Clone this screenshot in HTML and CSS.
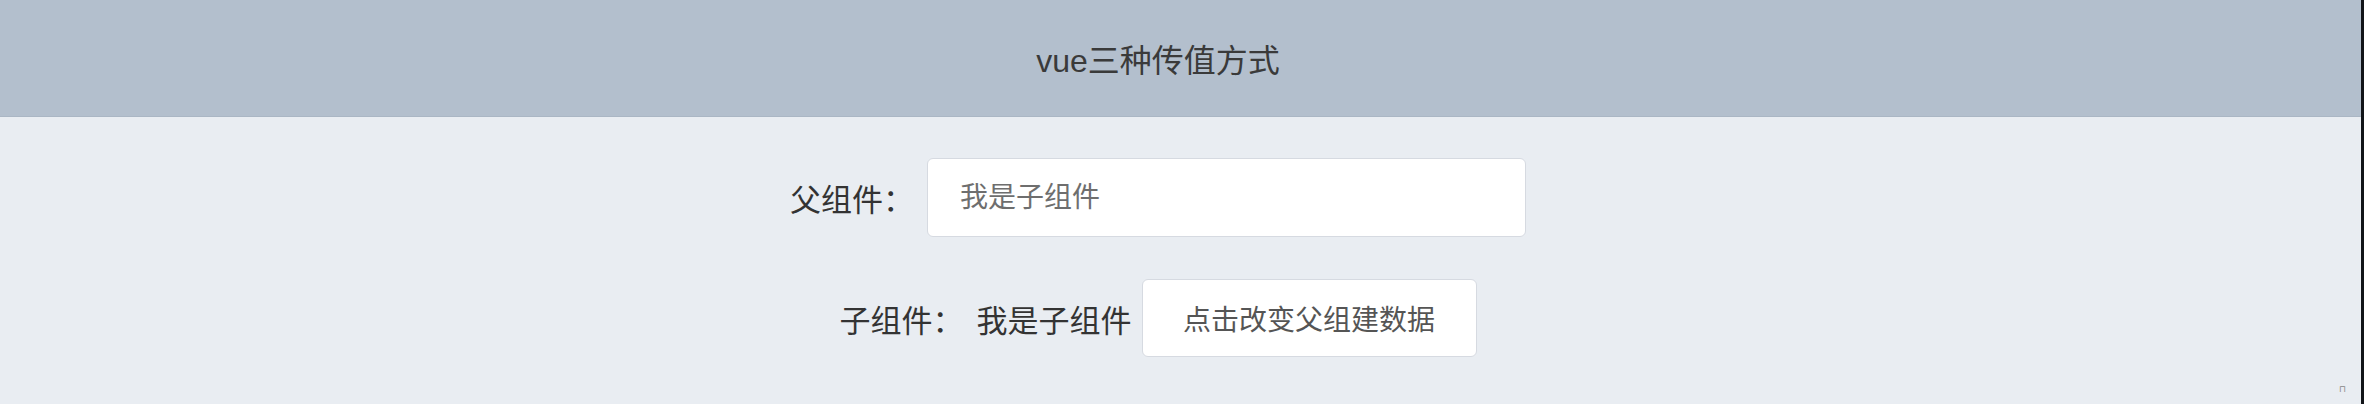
FILE: index.html
```html
<!DOCTYPE html>
<html lang="zh-CN">
<head>
    <meta charset="UTF-8">
    <title>vue三种传值方式</title>
    <link rel="stylesheet" href="styles.css">
</head>
<body>
    <div class="app">
        <header class="header">
            <h1>vue三种传值方式</h1>
        </header>

        <main class="main">
            <div class="row">
                <label class="label" for="parent-input">父组件：</label>
                <input id="parent-input" class="field" type="text" placeholder="我是子组件">
            </div>

            <div class="row">
                <span class="label">子组件：</span>
                <span class="value">我是子组件</span>
                <button class="btn">点击改变父组建数据</button>
            </div>
        </main>

        <span class="corner-mark">⊓</span>
    </div>
</body>
</html>
```

FILE: styles.css
```css
html, body {
    margin: 0;
    padding: 0;
    height: 100%;
}
body {
    background: #111418;
    font-family: "Liberation Sans", "Noto Sans CJK SC", sans-serif;
    color: #333;
}
.app {
    position: relative;
    height: 100%;
    margin-right: 3px;
    background: #e9edf2;
}
.header {
    height: 117px;
    background: #b3bfcd;
    border-bottom: 1px solid #aab6c4;
    box-sizing: border-box;
    display: flex;
    align-items: center;
    justify-content: center;
    padding-right: 45px;
}
.header h1 {
    margin: 0;
    font-size: 32px;
    font-weight: normal;
    color: #3a3a3a;
}
.main {
    display: flex;
    flex-direction: column;
    align-items: center;
    gap: 42px;
    padding-top: 41px;
    padding-right: 45px;
}
.row {
    display: flex;
    align-items: center;
}
.label {
    font-size: 31px;
    color: #333;
    margin-right: 13px;
}
.value {
    font-size: 31px;
    color: #333;
    margin-right: 10px;
}
.field {
    width: 599px;
    height: 79px;
    box-sizing: border-box;
    border: 1px solid #d6dae1;
    border-radius: 6px;
    background: #fff;
    padding: 0 32px;
    font-family: inherit;
    font-size: 28px;
    color: #333;
    outline: none;
}
.field::placeholder {
    color: #6e6e6e;
}
.btn {
    width: 335px;
    height: 78px;
    box-sizing: border-box;
    border: 1px solid #d6dae1;
    border-radius: 6px;
    background: #fff;
    font-family: inherit;
    font-size: 28px;
    color: #555;
    padding: 0;
    cursor: pointer;
}
.corner-mark {
    position: absolute;
    right: 15px;
    bottom: 10px;
    font-size: 9px;
    color: #888;
}
```
